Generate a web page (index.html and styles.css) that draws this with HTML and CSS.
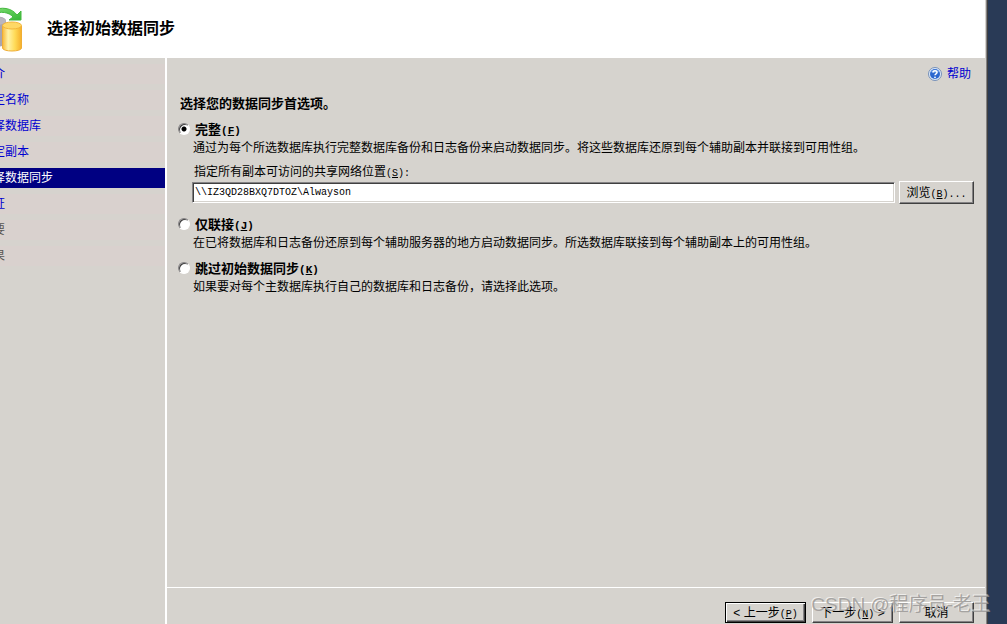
FILE: index.html
```html
<!DOCTYPE html>
<html lang="zh-CN">
<head>
    <meta charset="UTF-8">
    <meta name="viewport" content="width=device-width, initial-scale=1.0">
    <title>选择初始数据同步</title>
    <link rel="stylesheet" href="styles.css">
</head>
<body>

    <div class="wizard">
        <!-- Title bar -->
        <header class="wizard-header">
            <svg class="wizard-icon" width="48" height="48" viewBox="0 0 48 48" aria-hidden="true">
                <defs>
                    <linearGradient id="gold" x1="0" x2="1" y1="0" y2="0">
                        <stop offset="0" stop-color="#f8b838"/>
                        <stop offset="0.3" stop-color="#fff3a8"/>
                        <stop offset="0.65" stop-color="#ffdb58"/>
                        <stop offset="1" stop-color="#f5af2a"/>
                    </linearGradient>
                    <linearGradient id="green" x1="0" x2="1" y1="0" y2="1">
                        <stop offset="0" stop-color="#7fdc72"/>
                        <stop offset="1" stop-color="#35b835"/>
                    </linearGradient>
                </defs>
                <path d="M6 16c0-6 20-6 20 0v22c0 5-20 5-20 0z" fill="#aaa5ae"/>
                <ellipse cx="16" cy="16" rx="10" ry="4" fill="#bbb6be"/>
                <path d="M12 6c9-5 20-3 25 4l4-4v9H29l4-3C29 7 21 6 12 9z" fill="url(#green)" stroke="#45b83f"/>
                <path d="M22.500 21v22c0 4 19 4 19 0V21z" fill="url(#gold)" stroke="#f0ae35"/>
                <ellipse cx="32" cy="20.500" rx="9.500" ry="3.500" fill="#ffd866" stroke="#f3b53c"/>
            </svg>
            <h1>选择初始数据同步</h1>
        </header>

        <div class="wizard-body">
            <!-- Steps -->
            <nav class="steps">
                <a href="#">简介</a>
                <a href="#">指定名称</a>
                <a href="#">选择数据库</a>
                <a href="#">指定副本</a>
                <a href="#" class="current" aria-current="step">选择数据同步</a>
                <a href="#">验证</a>
                <span>摘要</span>
                <span>结果</span>
            </nav>

            <div class="page">
                <main class="page-content">
                    <a href="#" class="help">
                        <svg width="14" height="14" viewBox="0 0 14 14" aria-hidden="true">
                            <circle cx="7" cy="7" r="6.500" fill="#dce9fa" stroke="#7790b8"/>
                            <circle cx="7" cy="7" r="5" fill="#2c68cf"/>
                            <path d="M3 5c1-3 7-3 8 0-2 1-5 1-8 0z" fill="#6ea1ec"/>
                            <path d="M5 5.500c0-2.500 4-2.500 4 0C9 7 7 6.700 7 8.300" fill="none" stroke="#fff" stroke-width="1.500"/>
                            <circle cx="7" cy="10.300" r="0.900" fill="#fff"/>
                        </svg>
                        帮助
                    </a>

                    <h2>选择您的数据同步首选项。</h2>

                    <div class="option">
                        <label class="option-label">
                            <input type="radio" name="sync" checked>
                            <span>完整<span class="key">(<u>F</u>)</span></span>
                        </label>
                        <p>通过为每个所选数据库执行完整数据库备份和日志备份来启动数据同步。将这些数据库还原到每个辅助副本并联接到可用性组。</p>
                        <label class="share-label" for="share">指定所有副本可访问的共享网络位置<span class="key">(<u>S</u>):</span></label>
                        <div class="share-row">
                            <input type="text" id="share" value="\\IZ3QD28BXQ7DTOZ\Alwayson">
                            <button type="button" class="small">浏览<span class="key">(<u>B</u>)...</span></button>
                        </div>
                    </div>

                    <div class="option">
                        <label class="option-label">
                            <input type="radio" name="sync">
                            <span>仅联接<span class="key">(<u>J</u>)</span></span>
                        </label>
                        <p>在已将数据库和日志备份还原到每个辅助服务器的地方启动数据同步。所选数据库联接到每个辅助副本上的可用性组。</p>
                    </div>

                    <div class="option">
                        <label class="option-label">
                            <input type="radio" name="sync">
                            <span>跳过初始数据同步<span class="key">(<u>K</u>)</span></span>
                        </label>
                        <p>如果要对每个主数据库执行自己的数据库和日志备份，请选择此选项。</p>
                    </div>
                </main>

                <!-- Buttons -->
                <footer class="page-footer">
                    <button type="button" class="default">&lt; 上一步<span class="key">(<u>P</u>)</span></button>
                    <button type="button">下一步<span class="key">(<u>N</u>)</span> &gt;</button>
                    <button type="button" class="small">取消</button>
                </footer>
            </div>
        </div>
    </div>

    <div class="watermark">CSDN @程序员-老王</div>

</body>
</html>
```

FILE: styles.css
```css
/* General Styling */
* {
    box-sizing: border-box;
}

body {
    margin: 0;
    display: flex;
    min-height: 100vh;
    overflow: hidden;
    background: #293a56;
    color: #000;
    font-family: "Liberation Sans", "Noto Sans CJK SC", sans-serif;
    font-size: 12px;
    line-height: 18px;
}

h1, h2, p {
    margin: 0;
}

.key {
    font-family: "Liberation Mono", monospace;
    font-size: 10px;
    line-height: 10px;
}

/* Wizard window, its left edge is off screen */
.wizard {
    flex: 1;
    display: flex;
    flex-direction: column;
    margin-left: -20px;
    margin-right: 19px;
    background: #d6d3ce;
    border-right: 1px solid #404040;
    box-shadow: inset -1px 0 #848284;
}

.wizard-header {
    display: flex;
    align-items: center;
    gap: 19px;
    height: 58px;
    margin-right: 2px;
    background: #fff;
}

.wizard-header h1 {
    font-size: 16px;
    line-height: 24px;
}

.wizard-body {
    flex: 1;
    display: flex;
}

/* Steps */
.steps {
    display: flex;
    flex-direction: column;
    gap: 6px;
    width: 187px;
    padding-top: 6px;
    border-right: 2px solid #fff;
}

.steps a,
.steps span {
    padding-left: 1px;
    line-height: 20px;
    background: #d9d1ce;
    color: #0000d0;
    text-decoration: none;
}

.steps span {
    color: #5a5654;
}

.steps .current {
    background: #000082;
    color: #fff;
}

/* Page */
.page {
    flex: 1;
    display: flex;
    flex-direction: column;
    padding-right: 2px;
}

.page-content {
    flex: 1;
    display: flex;
    flex-direction: column;
    padding: 7px 11px 0;
}

.help {
    display: flex;
    align-items: center;
    align-self: flex-end;
    gap: 5px;
    margin-right: 3px;
    color: #0000d0;
    text-decoration: none;
}

h2 {
    margin: 12px 0 8px 2px;
    font-size: 13px;
    line-height: 18px;
}

.option {
    margin-bottom: 8px;
}

.option-label {
    display: flex;
    align-items: center;
    gap: 5px;
    height: 18px;
    font-size: 13px;
    font-weight: bold;
}

.option-label .key {
    font-size: 11px;
}

.option p {
    padding-left: 15px;
}

input[type="radio"] {
    appearance: none;
    width: 12px;
    height: 12px;
    margin: 0 0 2px;
    border: 1px solid;
    border-color: #848284 #fff #fff #848284;
    border-radius: 50%;
    background: #fff;
    box-shadow: inset 1px 1px #404040;
}

input[type="radio"]:checked {
    background: radial-gradient(circle, #000 2px, #fff 3px);
}

.share-label {
    display: block;
    margin-top: 6px;
    padding-left: 16px;
}

.share-row {
    display: flex;
    align-items: center;
    gap: 4px;
    margin-bottom: 12px;
    padding-left: 14px;
}

/* 12px under the share row already separates the options */
.option:has(.share-row) {
    margin-bottom: 0;
}

.share-row input {
    flex: 1;
    height: 21px;
    padding: 0 2px;
    border: 1px solid;
    border-color: #848284 #fff #fff #848284;
    box-shadow: inset 1px 1px #404040, inset -1px -1px #d6d3ce;
    font-family: "Liberation Mono", monospace;
    font-size: 10px;
}

/* Buttons */
button {
    width: 81px;
    height: 21px;
    padding: 0;
    border: 1px solid;
    border-color: #fff #404040 #404040 #fff;
    background: #d6d3ce;
    box-shadow: inset -1px -1px #848284;
    color: #000;
    font: inherit;
    white-space: nowrap;
}

button.small {
    width: 75px;
}

.share-row button {
    height: 23px;
}

button.default {
    border-color: #000;
    box-shadow: inset 1px 1px #fff, inset -1px -1px #404040, inset -2px -2px #848284;
}

.page-footer {
    display: flex;
    justify-content: flex-end;
    gap: 6px;
    padding: 14px 11px 1px;
    border-top: 1px solid #fff;
}

/* Watermark */
.watermark {
    position: absolute;
    right: 16px;
    bottom: 6px;
    color: rgba(150, 148, 146, 0.8);
    font-size: 19px;
    line-height: 26px;
    text-shadow: -1px -1px rgba(255, 255, 255, 0.6);
    pointer-events: none;
}
```
